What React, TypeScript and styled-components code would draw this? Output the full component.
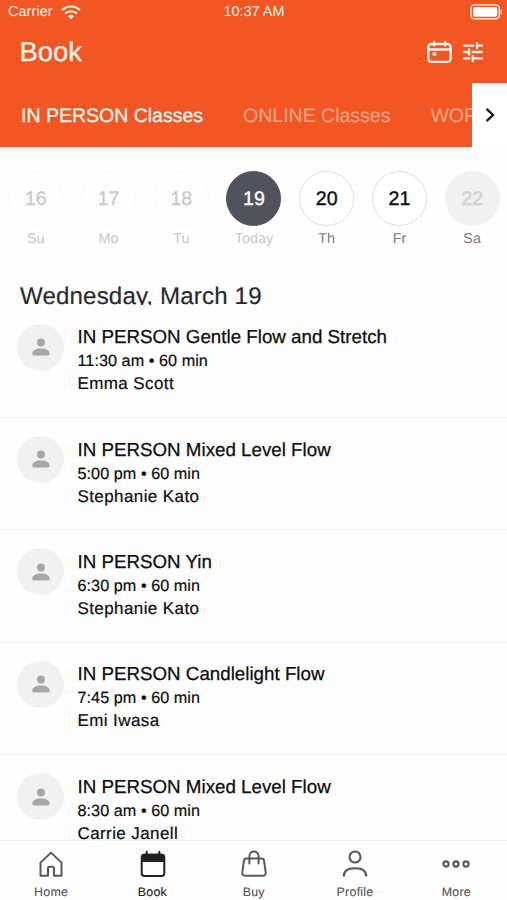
import React from 'react';
import styled, { createGlobalStyle, css } from 'styled-components';

const GlobalStyle = createGlobalStyle`
  * { box-sizing: border-box; }
  html, body { margin: 0; padding: 0; overflow: hidden; }
  body {
    background: #fff;
    font-family: "Liberation Sans", Arial, Helvetica, sans-serif;
    color: #0c0c0e;
    text-rendering: geometricPrecision;
  }
  svg { display: block; flex: none; }
`;

const Screen = styled.div`
  width: 507px;
  height: 900px;
  display: flex;
  flex-direction: column;
  overflow: hidden;
  background: #fefefe;
`;

const Header = styled.header`
  flex: none;
  height: 146.5px;
  display: flex;
  flex-direction: column;
  background: #f15624;
  color: #fff4ea;
`;

const StatusBar = styled.div`
  height: 24px;
  flex: none;
  display: grid;
  grid-template-columns: 1fr auto 1fr;
  align-items: center;
  padding: 0 4px 0 8px;
  font-size: 14.4px;
  line-height: 24px;
`;

const Carrier = styled.div`
  display: flex;
  align-items: center;
  gap: 8px;
  letter-spacing: 0.1px;
`;

const Clock = styled.div`
  margin: 0 3px 0 0;
`;

const BatterySlot = styled.div`
  justify-self: end;
`;

const TitleBar = styled.div`
  height: 59px;
  flex: none;
  display: flex;
  align-items: center;
  justify-content: space-between;
  padding: 0 24px 4px 19.5px;
`;

const PageTitle = styled.h1`
  margin: 0;
  font-size: 27.4px;
  font-weight: 400;
  line-height: 32px;
  -webkit-text-stroke: 0.3px currentColor;
`;

const Actions = styled.div`
  display: flex;
  align-items: center;
  gap: 10px;
`;

const TabBar = styled.div`
  flex: 1;
  display: flex;
  min-width: 0;
`;

const TabList = styled.div`
  flex: 1;
  min-width: 0;
  display: flex;
  align-items: center;
  gap: 40px;
  padding: 2px 0 0 21px;
  overflow: hidden;
`;

const Tab = styled.div<{ $active?: boolean }>`
  flex: none;
  font-size: 19.5px;
  line-height: 24px;
  white-space: nowrap;
  color: ${(p) => (p.$active ? '#fff4ea' : '#fba583')};
  -webkit-text-stroke: ${(p) => (p.$active ? 0.3 : 0.15)}px currentColor;
`;

const NextTab = styled.div`
  width: 35px;
  flex: none;
  display: flex;
  align-items: center;
  justify-content: center;
  background: #fff;
`;

const Week = styled.div`
  flex: none;
  height: 132px;
  margin: 0 -1.5px 0 -0.5px;
  padding-top: 24px;
  display: grid;
  grid-template-columns: repeat(7, 1fr);
`;

const Day = styled.div`
  display: flex;
  flex-direction: column;
  align-items: center;
`;

type DayKind = 'past' | 'today' | 'open' | 'closed';

const circleStyles = {
  past: css`color: #cacaca; border-color: #f9f9f9;`,
  today: css`color: #fff; background: #50535b; border-color: #50535b;`,
  open: css`color: #0c0c0e; background: #fff; border-color: #dededf;`,
  closed: css`color: #d0d0d0; background: #f1f1f1; border-color: #f1f1f1;`,
};

const DayCircle = styled.div<{ $kind: DayKind }>`
  width: 55px;
  height: 55px;
  border: 1px solid;
  border-radius: 50%;
  display: flex;
  align-items: center;
  justify-content: center;
  padding-top: 1px;
  font-size: 19.6px;
  line-height: 24px;
  -webkit-text-stroke: 0.35px currentColor;
  ${(p) => circleStyles[p.$kind]}
`;

const DayName = styled.div<{ $muted: boolean }>`
  margin-top: 5px;
  font-size: 14.2px;
  line-height: 17px;
  letter-spacing: 0.1px;
  color: ${(p) => (p.$muted ? '#c6c6c6' : '#77777a')};
`;

const DateHeading = styled.h2`
  flex: none;
  height: 26px;
  margin: 0 0 1px;
  padding-left: 20px;
  overflow: hidden;
  font-size: 24.1px;
  font-weight: 400;
  line-height: 36px;
  letter-spacing: 0.15px;
  color: #2b2b2e;
  -webkit-text-stroke: 0.2px currentColor;
`;

const ClassList = styled.main`
  flex: 1;
  min-height: 0;
  overflow: hidden;
`;

const ClassRow = styled.article`
  height: 112.4px;
  display: flex;
  align-items: flex-start;
  gap: 13.5px;
  padding: 18px 17px 0;
  border-bottom: 1px solid #f4f4f4;
`;

const Avatar = styled.div`
  width: 47px;
  height: 47px;
  flex: none;
  display: flex;
  align-items: center;
  justify-content: center;
  border-radius: 50%;
  background: #f1f1f1;
`;

const ClassInfo = styled.div`
  padding-top: 1.8px;
  white-space: nowrap;
`;

const ClassTitle = styled.div`
  font-size: 18.75px;
  line-height: 24px;
  -webkit-text-stroke: 0.25px currentColor;
`;

const ClassTime = styled.div`
  font-size: 16.2px;
  line-height: 24px;
  letter-spacing: 0.05px;
  -webkit-text-stroke: 0.2px currentColor;
`;

const Teacher = styled.div`
  font-size: 17px;
  line-height: 22px;
  letter-spacing: 0.4px;
  -webkit-text-stroke: 0.2px currentColor;
`;

const BottomNav = styled.nav`
  flex: none;
  height: 60px;
  padding-left: 0.5px;
  display: grid;
  grid-template-columns: repeat(5, 1fr);
  border-top: 1px solid #f1f1f1;
  background: #fefefe;
`;

const NavItem = styled.div<{ $active?: boolean }>`
  display: flex;
  flex-direction: column;
  align-items: center;
  padding-top: 8px;
  gap: 5px;
  font-size: 12.4px;
  line-height: 17px;
  letter-spacing: 0.25px;
  color: ${(p) => (p.$active ? '#202126' : '#57585c')};
  -webkit-text-stroke: 0.15px currentColor;
`;

const WifiIcon = () => (
  <svg width="20" height="15" viewBox="0 0 20 15" fill="none" stroke="currentColor" strokeWidth="2.1">
    <path d="M1 5.2C6 .3 14 .3 19 5.2M4.3 8.6c3.3-3.2 8.1-3.2 11.4 0" />
    <path d="M7 11.3c1.8-1.6 4.2-1.6 6 0l-3 3z" fill="currentColor" stroke="none" />
  </svg>
);

const BatteryIcon = () => (
  <svg width="33" height="16" viewBox="0 0 33 16" fill="none">
    <rect x=".9" y=".9" width="28.4" height="14" rx="3.6" stroke="currentColor" strokeWidth="1.4" />
    <rect x="3" y="3" width="24.2" height="9.8" rx="1.8" fill="#fff" />
    <path d="M30.7 5.2c1.9.6 1.9 4.8 0 5.4z" fill="currentColor" />
  </svg>
);

const CalendarIcon = () => (
  <svg width="26" height="24" viewBox="0 0 26 24" fill="none" stroke="currentColor" strokeWidth="2.3" strokeLinecap="round">
    <rect x="1.3" y="4" width="22.3" height="17.8" rx="3" />
    <path d="M2 9.5h21.5M7.2 2v3.5M18.2 2v3.500" />
    <circle cx="7.5" cy="14" r="2" fill="currentColor" stroke="none" />
  </svg>
);

const FilterIcon = () => (
  <svg width="20" height="20" viewBox="0 0 20 20" fill="none" stroke="currentColor" strokeWidth="2.3" strokeLinecap="round">
    <path d="M1.2 3.6h9.3M14 3.6h4.8M14 1.2v5M1.2 10h4.9M6.1 7.5v5M9.7 10h9.1M1.2 16.4h5M9.7 16.4h9.1M9.7 13.8V19" />
  </svg>
);

const ChevronIcon = () => (
  <svg width="10" height="16" viewBox="0 0 10 16" fill="none" stroke="#18191c" strokeWidth="2.3">
    <path d="M1.5 1.8L8 8l-6.5 6.2" />
  </svg>
);

const PersonIcon = () => (
  <svg width="18" height="18" viewBox="0 0 18 18" fill="#a7a7a7">
    <circle cx="9" cy="4.5" r="4" />
    <path d="M.3 15.5c0-3.4 4-5 8.7-5s8.7 1.6 8.7 5c0 1.2-.7 1.9-1.8 1.9H2.1C1 17.4.3 16.7.3 15.5z" />
  </svg>
);

const HomeIcon = () => (
  <svg width="30" height="30" viewBox="0 0 30 30" fill="none" stroke="currentColor" strokeWidth="2" strokeLinejoin="round">
    <path d="M4.5 13.6L15 3.6l10.5 10v13.2H18v-7.5c0-1-.6-1.6-1.6-1.6h-2.8c-1 0-1.6.6-1.6 1.6v7.5H4.5z" />
  </svg>
);

const BookIcon = () => (
  <svg width="30" height="30" viewBox="0 0 30 30" fill="none" stroke="currentColor" strokeWidth="2">
    <rect x="4.7" y="5.7" width="22.6" height="21.3" rx="2.8" />
    <path d="M4 13V8.3C4 6 5.3 4.8 7.5 4.8h17c2.2 0 3.5 1.2 3.5 3.5V13z" fill="currentColor" stroke="none" />
    <path d="M9.7 2.8v3M22.3 2.8v3" strokeLinecap="round" />
  </svg>
);

const BagIcon = () => (
  <svg width="30" height="30" viewBox="0 0 30 30" fill="none" stroke="currentColor" strokeWidth="2" strokeLinecap="round" strokeLinejoin="round">
    <path d="M7.2 9.5h15.6c1.3 0 2 .6 2.2 1.9l1.7 11.8c.3 2.3-.8 3.6-3 3.6H6.3c-2.2 0-3.3-1.3-3-3.6L5 11.4c.2-1.3.9-1.9 2.2-1.9z" />
    <path d="M10.4 14.6V7.2c0-6.3 9.2-6.3 9.2 0v7.4" />
  </svg>
);

const ProfileIcon = () => (
  <svg width="30" height="30" viewBox="0 0 30 30" fill="none" stroke="currentColor" strokeWidth="2.1">
    <circle cx="15" cy="8" r="5.5" />
    <path d="M3.7 27.6c0-5.3 4.3-8.3 11.3-8.3s11.3 3 11.3 8.3" />
  </svg>
);

const MoreIcon = () => (
  <svg width="30" height="30" viewBox="0 0 30 30" fill="none" stroke="currentColor" strokeWidth="2.1">
    <circle cx="5" cy="15" r="2.6" />
    <circle cx="15" cy="15" r="2.6" />
    <circle cx="25" cy="15" r="2.6" />
  </svg>
);

const days: { date: number; name: string; kind: DayKind; muted: boolean }[] = [
  { date: 16, name: 'Su', kind: 'past', muted: true },
  { date: 17, name: 'Mo', kind: 'past', muted: true },
  { date: 18, name: 'Tu', kind: 'past', muted: true },
  { date: 19, name: 'Today', kind: 'today', muted: true },
  { date: 20, name: 'Th', kind: 'open', muted: false },
  { date: 21, name: 'Fr', kind: 'open', muted: false },
  { date: 22, name: 'Sa', kind: 'closed', muted: false },
];

const classes = [
  { title: 'IN PERSON Gentle Flow and Stretch', time: '11:30 am • 60 min', teacher: 'Emma Scott' },
  { title: 'IN PERSON Mixed Level Flow', time: '5:00 pm • 60 min', teacher: 'Stephanie Kato' },
  { title: 'IN PERSON Yin', time: '6:30 pm • 60 min', teacher: 'Stephanie Kato' },
  { title: 'IN PERSON Candlelight Flow', time: '7:45 pm • 60 min', teacher: 'Emi Iwasa' },
  { title: 'IN PERSON Mixed Level Flow', time: '8:30 am • 60 min', teacher: 'Carrie Janell' },
];

const navItems = [
  { label: 'Home', Icon: HomeIcon },
  { label: 'Book', Icon: BookIcon, active: true },
  { label: 'Buy', Icon: BagIcon },
  { label: 'Profile', Icon: ProfileIcon },
  { label: 'More', Icon: MoreIcon },
];

export default function App() {
  return (
    <>
      <GlobalStyle />
      <Screen>
        <Header>
          <StatusBar>
            <Carrier>
              <span>Carrier</span>
              <WifiIcon />
            </Carrier>
            <Clock>10:37 AM</Clock>
            <BatterySlot>
              <BatteryIcon />
            </BatterySlot>
          </StatusBar>
          <TitleBar>
            <PageTitle>Book</PageTitle>
            <Actions>
              <CalendarIcon />
              <FilterIcon />
            </Actions>
          </TitleBar>
          <TabBar>
            <TabList>
              <Tab $active>IN PERSON Classes</Tab>
              <Tab>ONLINE Classes</Tab>
              <Tab>WORKSHOPS</Tab>
            </TabList>
            <NextTab>
              <ChevronIcon />
            </NextTab>
          </TabBar>
        </Header>
        <Week>
          {days.map((d) => (
            <Day key={d.date}>
              <DayCircle $kind={d.kind}>{d.date}</DayCircle>
              <DayName $muted={d.muted}>{d.name}</DayName>
            </Day>
          ))}
        </Week>
        <DateHeading>Wednesday, March 19</DateHeading>
        <ClassList>
          {classes.map((c) => (
            <ClassRow key={c.title + c.time}>
              <Avatar>
                <PersonIcon />
              </Avatar>
              <ClassInfo>
                <ClassTitle>{c.title}</ClassTitle>
                <ClassTime>{c.time}</ClassTime>
                <Teacher>{c.teacher}</Teacher>
              </ClassInfo>
            </ClassRow>
          ))}
        </ClassList>
        <BottomNav>
          {navItems.map(({ label, Icon, active }) => (
            <NavItem key={label} $active={active}>
              <Icon />
              <span>{label}</span>
            </NavItem>
          ))}
        </BottomNav>
      </Screen>
    </>
  );
}
